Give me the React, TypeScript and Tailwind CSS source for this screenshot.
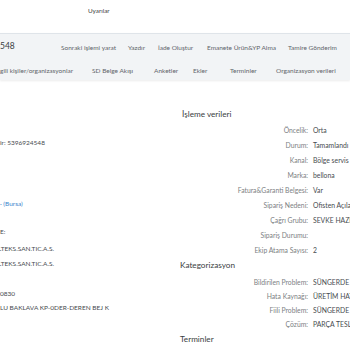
import React from "react";

const rows1: [string, string][] = [
  ["Öncelik:", "Orta"],
  ["Durum:", "Tamamlandı"],
  ["Kanal:", "Bölge servis"],
  ["Marka:", "bellona"],
  ["Fatura&Garanti Belgesi:", "Var"],
  ["Sipariş Nedeni:", "Ofisten Açıla"],
  ["Çağrı Grubu:", "SEVKE HAZIR"],
  ["Sipariş Durumu:", ""],
  ["Ekip Atama Sayısı:", "2"],
];

const rows2: [string, string][] = [
  ["Bildirilen Problem:", "SÜNGERDE"],
  ["Hata Kaynağı:", "ÜRETİM HATASI"],
  ["Fiili Problem:", "SÜNGERDE"],
  ["Çözüm:", "PARÇA TESLİM"],
];

function Row({ l, v, h }: { l: string; v: string; h: string }) {
  return (
    <div className={`flex items-center ${h}`}>
      <div className="w-[128px] shrink-0 text-right text-[#7d8184] whitespace-nowrap">{l}</div>
      <div className="ml-[5px] text-[#474b4f] whitespace-nowrap">{v}</div>
    </div>
  );
}

export default function App() {
  return (
    <div
      className="w-[350px] h-[350px] overflow-hidden bg-white text-[6px] leading-none text-[#32363a]"
      style={{ fontFamily: "Lato, 'Open Sans', sans-serif" }}
    >
      <div className="h-[33px] pl-[88px] pt-[8px] text-[6.3px] text-[#3a3e42]">Uyarılar</div>
      <div className="h-[47px] bg-[#f2f4f6] border-t border-[#dfe4e9] shadow-[0_1px_2px_rgba(0,0,0,0.08)] text-[6.5px]">
        <div className="h-[28px] flex items-center whitespace-nowrap">
          <div className="w-[61px] text-[8.5px] -mt-[4px] text-[#3a3e42]">548</div>
          <div className="w-[67px] text-[#5f656b]">Sonraki işlemi yarat</div>
          <div className="w-[30px] text-[#5f656b]">Yazdır</div>
          <div className="w-[49px] text-[#5f656b]">İade Oluştur</div>
          <div className="w-[81px] text-[#5f656b]">Emanete Ürün&amp;YP Alma</div>
          <div className="text-[#5f656b]">Tamire Gönderim</div>
        </div>
        <div className="h-[18px] flex items-center whitespace-nowrap text-[#5f656b]">
          <div className="w-[92px]">gili kişiler/organizasyonlar</div>
          <div className="w-[62px]">SD Belge Akışı</div>
          <div className="w-[39px]">Anketler</div>
          <div className="w-[37px]">Ekler</div>
          <div className="w-[46px]">Terminler</div>
          <div>Organizasyon verileri</div>
        </div>
      </div>
      <div className="flex text-[6.8px]">
        <div className="w-[180px] shrink-0 pt-[56px] text-[#474b4f] whitespace-nowrap text-[6.5px]">
          <div className="h-[15px] flex items-center">ir: 5396924548</div>
          <div className="h-[15px] mt-[46px] flex items-center text-[#3b86cc]">· (Bursa)</div>
          <div className="h-[15px] mt-[13px] flex items-center">E:</div>
          <div className="h-[15px] mt-[2px] flex items-center -ml-[2px]">LTEKS.SAN.TIC.A.S.</div>
          <div className="h-[15px] flex items-center -ml-[2px]">LTEKS.SAN.TIC.A.S.</div>
          <div className="h-[14px] mt-[15px] flex items-center">0830</div>
          <div className="h-[14px] flex items-center">LU BAKLAVA KP-0DER-DEREN BEJ K</div>
        </div>
        <div className="flex-1 min-w-0 pt-[28px]">
          <div className="h-[12px] flex items-center text-[8.2px] pl-[2px] text-[#3a3e42]">İşleme verileri</div>
          <div className="pt-[3px]">
            {rows1.map(([l, v]) => (
              <Row key={l} l={l} v={v} h="h-[15px]" />
            ))}
          </div>
          <div className="h-[12px] mt-[1px] flex items-center text-[8.2px] text-[#3a3e42]">Kategorizasyon</div>
          <div className="pt-[4px]">
            {rows2.map(([l, v]) => (
              <Row key={l} l={l} v={v} h="h-[14.2px]" />
            ))}
          </div>
          <div className="h-[12px] mt-[1px] flex items-center text-[8.2px] text-[#3a3e42]">Terminler</div>
        </div>
      </div>
    </div>
  );
}
